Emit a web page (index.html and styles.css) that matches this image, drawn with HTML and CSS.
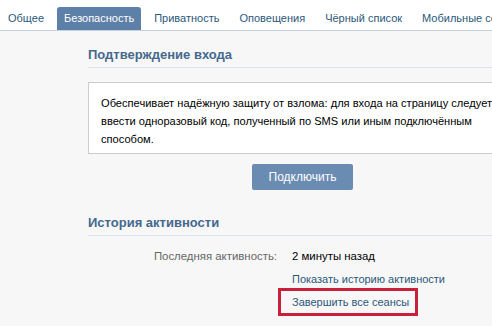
FILE: index.html
```html
<!DOCTYPE html>
<html lang="ru">
<head>
  <meta charset="UTF-8" />
  <title>Настройки — Безопасность</title>
  <link rel="stylesheet" href="styles.css">
</head>
<body>

<nav class="tabs">
  <a class="tab">Общее</a>
  <a class="tab active">Безопасность</a>
  <a class="tab">Приватность</a>
  <a class="tab">Оповещения</a>
  <a class="tab">Чёрный список</a>
  <a class="tab">Мобильные сервисы</a>
</nav>

<main class="page">
  <section class="block">
    <h2 class="block-title">Подтверждение входа</h2>
    <div class="notice">
      Обеспечивает надёжную защиту от взлома: для входа на страницу следует<br>
      ввести одноразовый код, полученный по SMS или иным подключённым<br>
      способом.
    </div>
    <div class="actions">
      <button class="btn">Подключить</button>
    </div>
  </section>

  <section class="block">
    <h2 class="block-title">История активности</h2>
    <div class="rows">
      <div class="label">Последняя активность:</div>
      <div class="value">2 минуты назад</div>
      <div class="label"></div>
      <div class="value"><a class="link">Показать историю активности</a></div>
      <div class="label"></div>
      <div class="value"><a class="link marked">Завершить все сеансы</a></div>
    </div>
  </section>
</main>

</body>
</html>
```

FILE: styles.css
```css
* { box-sizing: border-box; margin: 0; padding: 0; }

html {
  overflow: hidden;
}

body {
  font-family: 'Liberation Sans', Arial, sans-serif;
  font-size: 11.4px;
  color: #000;
  background: #f7f7f7;
  width: 492px;
  min-height: 326px;
}

.tabs {
  display: flex;
  gap: 6px;
  padding: 7px 0 0 1px;
  background: #fff;
  border-bottom: 1px solid #c5cfd9;
  white-space: nowrap;
  overflow: hidden;
}

.tab {
  display: block;
  height: 23px;
  line-height: 23px;
  padding: 0 7px;
  font-size: 11px;
  color: #2b587a;
  border-radius: 3px 3px 0 0;
}

.tab.active {
  background: #5d80a8;
  color: #fff;
}

.page {
  width: 517px;
  padding: 16px 0 0 88px;
}

.block-title {
  font-size: 13px;
  line-height: 16px;
  font-weight: bold;
  color: #45688e;
  padding-bottom: 4px;
  border-bottom: 1px solid #d9e0e7;
}

.notice {
  margin-top: 14px;
  background: #fff;
  border: 1px solid #cccccc;
  padding: 11px 11px 5px 12px;
  font-size: 11.1px;
  line-height: 18px;
  white-space: nowrap;
}

.actions {
  display: flex;
  justify-content: center;
  padding: 10px 0 0;
}

.btn {
  width: 101px;
  height: 26px;
  border: none;
  border-radius: 2px;
  background: #6a8cb2;
  color: #fff;
  font-family: inherit;
  font-size: 12px;
}

.block + .block {
  margin-top: 25px;
}

.rows {
  display: grid;
  grid-template-columns: 189px 1fr;
  column-gap: 15px;
  row-gap: 5px;
  padding-top: 11px;
  line-height: 18px;
}

.label {
  text-align: right;
  color: #666;
}

.link {
  color: #2b587a;
  font-size: 11px;
}

.link.marked {
  display: inline-block;
  margin: -5px 0 -5px -14px;
  padding: 2px 6px 2px 11px;
  border: 3px solid #c8203a;
}
```
